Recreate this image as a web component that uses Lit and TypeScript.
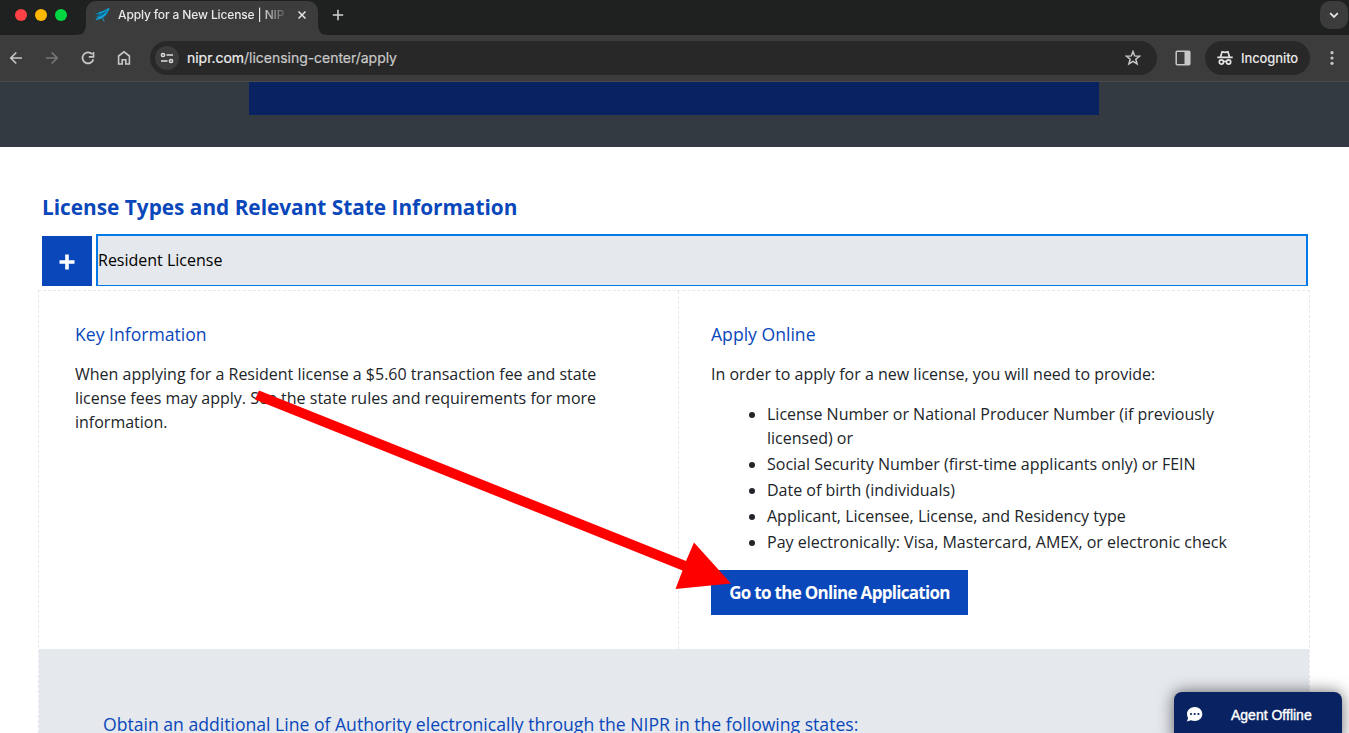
import { LitElement, html, css } from "lit";
import { customElement } from "lit/decorators.js";

@customElement("browser-chrome")
export class BrowserChrome extends LitElement {
  static styles = css`
    :host { display: block; font-family: Inter, Roboto, sans-serif; color: #e8e8e8; }
    svg { display: block; flex: none; }
    .strip { height: 35px; background: #1f2120; display: flex; align-items: flex-start; }
    .lights { display: flex; gap: 8px; padding: 9px 0 0 15px; width: 61px; }
    .light { width: 12px; height: 12px; border-radius: 50%; }
    .red { background: #ff4245; }
    .amber { background: #ffb900; }
    .green { background: #00d741; }
    .foot { margin-top: 25px; }
    .tab { width: 232px; height: 34px; margin-top: 1px; background: #3c3c3c; border-radius: 10px 10px 0 0;
      display: flex; align-items: center; box-sizing: border-box; padding: 0 10px 6px 8px; }
    .title { margin-left: 8px; width: 168px; overflow: hidden; white-space: nowrap; font-size: 12px; line-height: 18px; font-weight: 500;
      letter-spacing: -0.130px; -webkit-mask-image: linear-gradient(90deg, #000 142px, transparent 172px); }
    .close { margin-left: 10px; }
    .plus { margin: 9px 0 0 4px; }
    .menu { margin: 1px 1px 0 auto; width: 28px; height: 28px; border-radius: 10px; background: #3c3c3c;
      display: flex; align-items: center; justify-content: center; }
    .bar { height: 47px; box-sizing: border-box; background: #3c3c3c; border-bottom: 1px solid #4a4a4a;
      display: flex; align-items: center; padding: 0 9px 0 8px; }
    .nav { display: flex; gap: 20px; }
    .address { margin-left: 18px; width: 1007px; height: 34px; border-radius: 17px; background: #282828;
      display: flex; align-items: center; box-sizing: border-box; padding: 0 16px 0 5px; }
    .site { width: 24px; height: 24px; border-radius: 50%; background: #3c3c3c; display: flex; align-items: center; justify-content: center; }
    .url { margin-left: 8px; font-size: 14px; line-height: 20px; letter-spacing: -0.03px; white-space: nowrap; flex: 1; color: #c9c9c9; -webkit-text-stroke: .2px; }
    .host { color: #eee; }
    .side { margin-left: 18px; }
    .incognito { margin-left: 14px; width: 105px; height: 34px; border-radius: 17px; background: #282828;
      display: flex; align-items: center; box-sizing: border-box; padding-left: 12px; gap: 8px;
      font-size: 13px; font-weight: 500; letter-spacing: -0.1px; }
    .dots { margin-left: 14px; }
  `;
  render() {
    return html`
      <div class="strip">
        <div class="lights"><i class="light red"></i><i class="light amber"></i><i class="light green"></i></div>
        <svg class="foot" width="10" height="10"><path d="M10 0v10H0Q10 10 10 0" fill="#3c3c3c"/></svg>
        <div class="tab">
          <svg width="16" height="16" viewBox="0 0 16 16">
            <path d="M1 8C3 5 7 5 10 3.500Q13 2 15.500 .8C14 8 10 12 1 13.500Q4 11.500 5 10Q3 11 .8 11Q4 9 5 7.500Q3 7 1 8Z" fill="#087fae"/>
            <path d="M4 11Q11 9 15 1.500Q10 5 5 6M2 12.500Q7 12 12 7M8 11Q10 12.500 10 14.500" fill="none" stroke="#19a9dc" stroke-width="1"/>
            <path d="M5 9Q10 6.500 13 3.500" fill="none" stroke="#17445d" stroke-width=".7"/>
          </svg>
          <span class="title">Apply for a New License | NIP</span>
          <svg class="close" width="12" height="12" viewBox="0 0 12 12"><path d="M2.500 2.500l7 7M9.500 2.500l-7 7" stroke="#e4e4e4" stroke-width="1.500"/></svg>
        </div>
        <svg class="foot" width="10" height="10"><path d="M0 0v10H10Q0 10 0 0" fill="#3c3c3c"/></svg>
        <svg class="plus" width="12" height="12" viewBox="0 0 12 12"><path d="M6 .8v10.400M.8 6h10.400" stroke="#d4d4d4" stroke-width="1.500"/></svg>
        <div class="menu"><svg width="12" height="12" viewBox="0 0 12 12"><path d="M2.200 4.200L6 8l3.800-3.800" fill="none" stroke="#e4e4e4" stroke-width="1.800"/></svg></div>
      </div>
      <div class="bar">
        <div class="nav">
          <svg width="16" height="16" viewBox="0 0 16 16"><path d="M14 8H3M8.300 2.500L2.800 8l5.500 5.500" fill="none" stroke="#c7c7c7" stroke-width="1.700"/></svg>
          <svg width="16" height="16" viewBox="0 0 16 16"><path d="M2 8h11M7.700 2.500L13.200 8l-5.500 5.500" fill="none" stroke="#777" stroke-width="1.700"/></svg>
          <svg width="16" height="16" viewBox="0 0 16 16"><path d="M12.200 4.300A5.500 5.500 0 1 0 13.400 9.200M13.500 2v4.800H8.800" fill="none" stroke="#c7c7c7" stroke-width="1.700"/></svg>
          <svg width="16" height="16" viewBox="0 0 16 16"><path d="M2.600 14V6L8 1.800 13.400 6v8H9.800V9.800H6.200V14Z" fill="none" stroke="#c7c7c7" stroke-width="1.600"/></svg>
        </div>
        <div class="address">
          <div class="site"><svg width="14" height="14" viewBox="0 0 14 14"><g fill="none" stroke="#dedede" stroke-width="1.500"><circle cx="3" cy="4" r="1.600"/><path d="M6.500 4H13M1 10h6.500"/><circle cx="11" cy="10" r="1.600"/></g></svg></div>
          <span class="url"><span class="host">nipr.com</span>/licensing-center/apply</span>
          <svg width="16" height="16" viewBox="0 0 16 16"><path d="M8 1.500l1.700 4.400 4.900.3-3.800 3 1.300 4.700L8 11.300l-4.100 2.600 1.300-4.700-3.800-3 4.900-.3Z" fill="none" stroke="#c7c7c7" stroke-width="1.500"/></svg>
        </div>
        <svg class="side" width="16" height="16" viewBox="0 0 16 16"><rect x="1.200" y="1.200" width="13.600" height="13.600" rx="1" fill="none" stroke="#c7c7c7" stroke-width="1.500"/><path d="M9.500 1H15v14H9.500Z" fill="#c7c7c7"/></svg>
        <div class="incognito">
          <svg width="16" height="16" viewBox="0 0 16 16"><g fill="none" stroke="#e4e4e4" stroke-width="1.700"><path d="M.3 7.300h15.400M3.500 7L5.100 1.800Q6.500 2 8 2.300 9.500 2 10.900 1.800L12.500 7"/><circle cx="4.400" cy="12" r="2.100"/><circle cx="11.600" cy="12" r="2.100"/><path d="M6.500 11.700Q8 10.800 9.500 11.700"/></g></svg>
          <span>Incognito</span>
        </div>
        <svg class="dots" width="16" height="16" viewBox="0 0 16 16" fill="#c7c7c7"><circle cx="8" cy="2.700" r="1.600"/><circle cx="8" cy="8" r="1.600"/><circle cx="8" cy="13.300" r="1.600"/></svg>
      </div>`;
  }
}

@customElement("app-root")
export class AppRoot extends LitElement {
  static styles = css`
    :host { display: block; position: relative; width: 1349px; height: 733px; overflow: hidden; background: #fff;
      font-family: "Open Sans", sans-serif; color: #212529; font-size: 16px; line-height: 24px; }
    h2, h3, p, ul { margin: 0; font-weight: 400; }
    .hero { height: 65px; background: #343a41; padding-left: 249px; }
    .hero-box { width: 850px; height: 33px; background: #092262; }
    .heading { padding: 44px 0 0 42px; font-size: 20.800px; line-height: 32px; font-weight: 700; color: #0947ba; white-space: nowrap; }
    .accordion { display: flex; gap: 4px; padding: 11px 41px 0 42px; height: 53px; }
    .toggle { width: 50px; height: 50px; margin-top: 2px; background: #0947ba; display: flex; align-items: center; justify-content: center; }
    .plus { margin-top: 2px; }
    .label { flex: 1; height: 52px; box-sizing: border-box; border: 2px solid #0078e7; border-bottom-width: 1px; background: #e5e8ed; color: #000; line-height: 49px; }
    .panel { margin: 3px 39px 0 38px; border: 1px dashed #e5e8ec; border-bottom: 0; }
    .columns { display: flex; height: 358px; }
    .col { box-sizing: border-box; padding: 30px 36px 0; }
    .left { width: 640px; border-right: 1px dashed #e5e8ec; }
    .right { width: 630px; padding-left: 32px; }
    .sub { font-size: 17.600px; line-height: 26px; color: #0947ba; white-space: nowrap; margin-bottom: 15px; }
    .line { display: block; white-space: nowrap; }
    .list { padding: 0 0 0 56px; margin: 16px 0 16px; }
    .list li { margin-bottom: 2px; }
    .cta { display: inline-flex; width: 257px; height: 45px; align-items: center; justify-content: center; background: #0947ba;
      color: #fff; font-weight: 700; font-size: 17px; letter-spacing: -0.700px; white-space: nowrap; }
    .more { height: 84px; background: #e5e8ed; padding: 62px 0 0 64px; box-sizing: border-box; }
    .more .sub { margin: 0; }
    .arrow { position: absolute; left: 0; top: 0; pointer-events: none; }
    .chat { position: absolute; left: 1174px; top: 692px; width: 168px; height: 50px; border-radius: 8px 8px 0 0; background: #092262;
      box-shadow: 0 0 16px rgba(0, 0, 0, .6); color: #fff; display: flex; box-sizing: border-box; padding: 14px 0 0 12px;
      font: 14px/18px "Liberation Sans", sans-serif; }
    .agent { margin-left: 28px; white-space: nowrap; -webkit-text-stroke: .4px #fff; }
  `;
  render() {
    return html`
      <browser-chrome></browser-chrome>
      <div class="hero"><div class="hero-box"></div></div>
      <h2 class="heading"><span>License Types and Relevant State Information</span></h2>
      <div class="accordion">
        <div class="toggle"><svg class="plus" width="16" height="16" viewBox="0 0 16 16"><path d="M8 .5v15M.5 8h15" stroke="#fff" stroke-width="3.600"/></svg></div>
        <div class="label">Resident License</div>
      </div>
      <div class="panel">
        <div class="columns">
          <div class="col left">
            <h3 class="sub">Key Information</h3>
            <p>
              <span class="line">When applying for a Resident license a $5.60 transaction fee and state</span>
              <span class="line">license fees may apply. See the state rules and requirements for more</span>
              <span class="line">information.</span>
            </p>
          </div>
          <div class="col right">
            <h3 class="sub">Apply Online</h3>
            <p>In order to apply for a new license, you will need to provide:</p>
            <ul class="list">
              <li><span class="line">License Number or National Producer Number (if previously</span><span class="line">licensed) or</span></li>
              <li>Social Security Number (first-time applicants only) or FEIN</li>
              <li>Date of birth (individuals)</li>
              <li>Applicant, Licensee, License, and Residency type</li>
              <li>Pay electronically: Visa, Mastercard, AMEX, or electronic check</li>
            </ul>
            <div class="cta">Go to the Online Application</div>
          </div>
        </div>
        <div class="more"><h3 class="sub">Obtain an additional Line of Authority electronically through the NIPR in the following states:</h3></div>
      </div>
      <svg class="arrow" width="1349" height="733"><path d="M259 390.500L686 561 694 542.500 731 583.500 675.500 589 682.500 570.500 255 399.500Z" fill="#f00"/></svg>
      <div class="chat">
        <svg width="17" height="17" viewBox="0 0 17 17"><path d="M8.800 1C13 1 16.300 4 16.300 8S13 15 8.800 15Q6.800 15 5 14.200L.6 15.600Q1.800 14 2 12Q1 10 1 8C1 4 4.600 1 8.800 1Z" fill="#fff"/><g fill="#092262"><circle cx="5" cy="8" r="1.100"/><circle cx="8.700" cy="8" r="1.100"/><circle cx="12.400" cy="8" r="1.100"/></g></svg>
        <span class="agent">Agent Offline</span>
      </div>`;
  }
}
